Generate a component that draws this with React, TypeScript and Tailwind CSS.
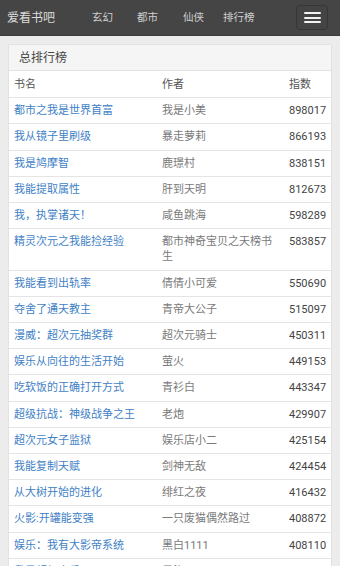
const rows = [
  { name: "都市之我是世界首富", author: "我是小美", score: "898017" },
  { name: "我从镜子里刷级", author: "暴走萝莉", score: "866193" },
  { name: "我是鸠摩智", author: "鹿璟村", score: "838151" },
  { name: "我能提取属性", author: "肝到天明", score: "812673" },
  { name: "我，执掌诸天！", author: "咸鱼跳海", score: "598289" },
  { name: "精灵次元之我能捡经验", author: "都市神奇宝贝之天榜书生", score: "583857" },
  { name: "我能看到出轨率", author: "倩倩小可爱", score: "550690" },
  { name: "夺舍了通天教主", author: "青帝大公子", score: "515097" },
  { name: "漫威：超次元抽奖群", author: "超次元骑士", score: "450311" },
  { name: "娱乐从向往的生活开始", author: "萤火", score: "449153" },
  { name: "吃软饭的正确打开方式", author: "青衫白", score: "443347" },
  { name: "超级抗战：神级战争之王", author: "老炮", score: "429907" },
  { name: "超次元女子监狱", author: "娱乐店小二", score: "425154" },
  { name: "我能复制天赋", author: "剑神无敌", score: "424454" },
  { name: "从大树开始的进化", author: "绯红之夜", score: "416432" },
  { name: "火影:开罐能变强", author: "一只废猫偶然路过", score: "408872" },
  { name: "娱乐：我有大影帝系统", author: "黑白1111", score: "408110" },
  { name: "我是超级大反派", author: "墨染", score: "402315" },
];

const font = { fontFamily: "Roboto, 'Noto Sans CJK SC', sans-serif" };

export default function App() {
  return (
    <div className="h-[566px] overflow-hidden bg-[#ececec]" style={font}>
      <nav className="h-[36px] bg-[#454545] border-b border-[#3a3a3a] flex items-center pl-[7px] pr-[12px]">
        <span className="text-[12px] text-[#dcdcdc] w-[85px]">爱看书吧</span>
        <div className="flex items-center text-[10.5px] text-[#d0d0d0]">
          <span className="w-[45px]">玄幻</span>
          <span className="w-[46px]">都市</span>
          <span className="w-[40px]">仙侠</span>
          <span>排行榜</span>
        </div>
        <button className="ml-auto w-[32px] h-[25px] rounded-[4px] border border-[#363636] bg-[#444] flex flex-col items-center justify-center gap-[2.3px]">
          <span className="block w-[17px] h-[2px] rounded-[1px] bg-[#f2f2f2]" />
          <span className="block w-[17px] h-[2px] rounded-[1px] bg-[#f2f2f2]" />
          <span className="block w-[17px] h-[2px] rounded-[1px] bg-[#f2f2f2]" />
        </button>
      </nav>

      <div className="mx-[8px] mt-[8px] bg-white border border-[#e2e2e2] rounded-[2px]">
        <div className="h-[26px] bg-[#f5f5f5] border-b border-[#e2e2e2] flex items-center pl-[10px] text-[12px] text-[#444]">
          总排行榜
        </div>
        <table className="w-full table-fixed text-[11px] leading-[15.2px]">
          <colgroup>
            <col className="w-[148px]" />
            <col className="w-[127px]" />
            <col />
          </colgroup>
          <thead>
            <tr className="text-[#555] text-left">
              <th className="font-normal px-[5px] pt-[6px] pb-[5px]">书名</th>
              <th className="font-normal px-[5px] pt-[6px] pb-[5px]">作者</th>
              <th className="font-normal px-[5px] pt-[6px] pb-[5px]">指数</th>
            </tr>
          </thead>
          <tbody>
            {rows.map((r) => (
              <tr key={r.name} className="border-t border-[#e4e4e4] align-top">
                <td className="px-[5px] py-[5px] text-[#3f7fc6]">{r.name}</td>
                <td className="px-[5px] py-[5px] text-[#7a7a7a]">{r.author}</td>
                <td className="px-[5px] py-[5px] text-[#444]">{r.score}</td>
              </tr>
            ))}
          </tbody>
        </table>
      </div>
    </div>
  );
}
